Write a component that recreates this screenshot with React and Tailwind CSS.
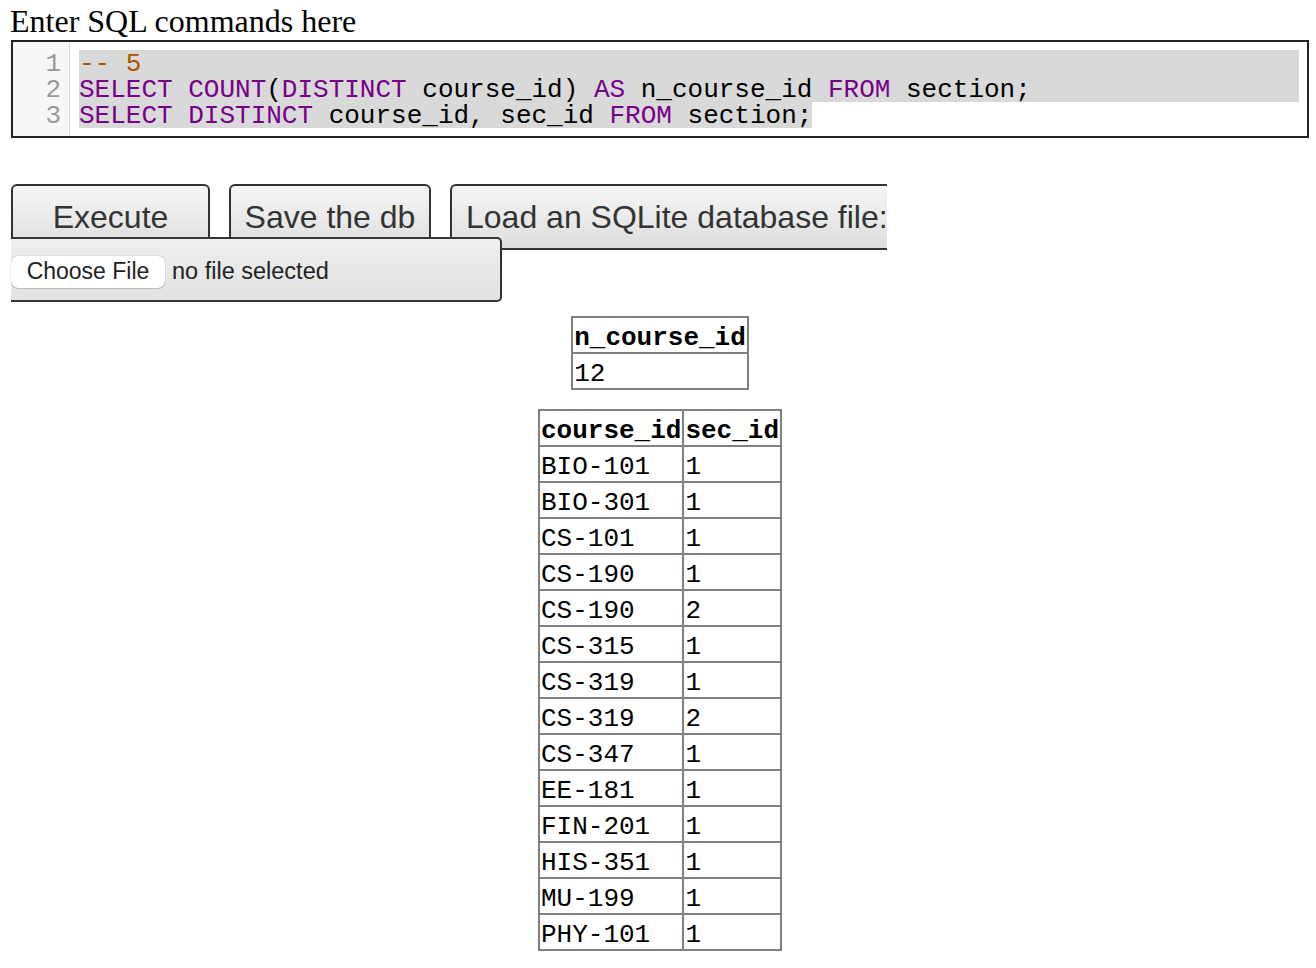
import React from "react";

const mono = { fontFamily: '"Liberation Mono", "Courier New", monospace' };
const sans = { fontFamily: '"Liberation Sans", Arial, Helvetica, sans-serif' };
const serif = { fontFamily: '"Liberation Serif", "Times New Roman", serif' };

const K = ({ children }) => <span className="text-[#770088]">{children}</span>;

const rows = [
  ["BIO-101", "1"],
  ["BIO-301", "1"],
  ["CS-101", "1"],
  ["CS-190", "1"],
  ["CS-190", "2"],
  ["CS-315", "1"],
  ["CS-319", "1"],
  ["CS-319", "2"],
  ["CS-347", "1"],
  ["EE-181", "1"],
  ["FIN-201", "1"],
  ["HIS-351", "1"],
  ["MU-199", "1"],
  ["PHY-101", "1"],
];

const cell = "border-2 border-[#808080] px-[1px] pt-[6px] pb-0 h-[34px] leading-[28px] text-left align-top whitespace-pre";

export default function App() {
  return (
    <div className="bg-white text-black min-h-[968px]">
      <div className="ml-[11px] w-[1298px]">
        <div style={serif} className="text-[32px] pt-[3px] leading-[37px] h-[40px] -ml-[1px]">
          Enter SQL commands here
        </div>

        <div className="border-2 border-[#222222] flex h-[98px]" style={mono}>
          <div className="w-[57px] bg-[#f7f7f7] border-r border-[#dddddd] pt-[8px] pr-[8px] text-right text-[#999999] text-[26px] leading-[23px]">
            <div className="h-[26px] pt-[3px]">1</div>
            <div className="h-[26px] pt-[3px]">2</div>
            <div className="h-[26px] pt-[3px]">3</div>
          </div>
          <div className="flex-1 pt-[8px] pl-[9px] pr-[8px] text-[26px] leading-[23px] whitespace-pre">
            <div className="h-[26px] pt-[3px] bg-[#d9d9d9]">
              <span className="text-[#aa5500]">-- 5</span>
            </div>
            <div className="h-[26px] pt-[3px] bg-[#d9d9d9]">
              <K>SELECT</K> <K>COUNT</K>(<K>DISTINCT</K> course_id) <K>AS</K> n_course_id <K>FROM</K> section;
            </div>
            <div className="h-[26px]">
              <span className="bg-[#d9d9d9] inline-block h-[26px] pt-[3px]">
                <K>SELECT</K> <K>DISTINCT</K> course_id, sec_id <K>FROM</K> section;
              </span>
            </div>
          </div>
        </div>

        <div className="mt-[46px] flex items-start gap-[19px] text-[#333333]" style={sans}>
          <div className="w-[199px] h-[66px] border-2 border-[#333333] rounded-t-[6px] bg-gradient-to-b from-[#f6f6f6] to-[#dedede] flex items-center justify-center text-[32px]">
            Execute
          </div>
          <div className="w-[202px] h-[66px] border-2 border-[#333333] rounded-t-[6px] bg-gradient-to-b from-[#f6f6f6] to-[#dedede] flex items-center justify-center text-[32px]">
            Save the db
          </div>
          <div className="w-[437px] h-[66px] border-2 border-r-0 border-[#333333] rounded-tl-[6px] bg-gradient-to-b from-[#f6f6f6] to-[#dedede] flex items-center pl-[14px] text-[32px] overflow-hidden whitespace-nowrap">
            Load an SQLite database file:
          </div>
        </div>

        <div
          style={sans}
          className="relative z-10 -mt-[13px] w-[491px] h-[65px] border-2 border-l-0 border-[#333333] rounded-r-[5px] bg-gradient-to-b from-[#efefef] to-[#e2e2e2] flex items-center pt-[4px]"
        >
          <div className="w-[154px] h-[32px] bg-white rounded-[7px] shadow-[0_0_1px_rgba(0,0,0,0.45),0_1px_1px_rgba(0,0,0,0.15)] flex items-center justify-center text-[23px] text-[#222222]">
            Choose File
          </div>
          <div className="ml-[7px] text-[23.5px] text-[#222222]">no file selected</div>
        </div>

        <div className="mt-[14px] flex flex-col items-center" style={mono}>
          <table className="border-collapse border-2 border-[#808080] text-[26px]">
            <thead>
              <tr>
                <th className={cell + " font-bold"}>n_course_id</th>
              </tr>
            </thead>
            <tbody>
              <tr>
                <td className={cell}>12</td>
              </tr>
            </tbody>
          </table>

          <table className="mt-[19px] border-collapse border-2 border-[#808080] text-[26px]">
            <thead>
              <tr>
                <th className={cell + " font-bold"}>course_id</th>
                <th className={cell + " font-bold"}>sec_id</th>
              </tr>
            </thead>
            <tbody>
              {rows.map((r, i) => (
                <tr key={i}>
                  <td className={cell}>{r[0]}</td>
                  <td className={cell}>{r[1]}</td>
                </tr>
              ))}
            </tbody>
          </table>
        </div>
      </div>
    </div>
  );
}
